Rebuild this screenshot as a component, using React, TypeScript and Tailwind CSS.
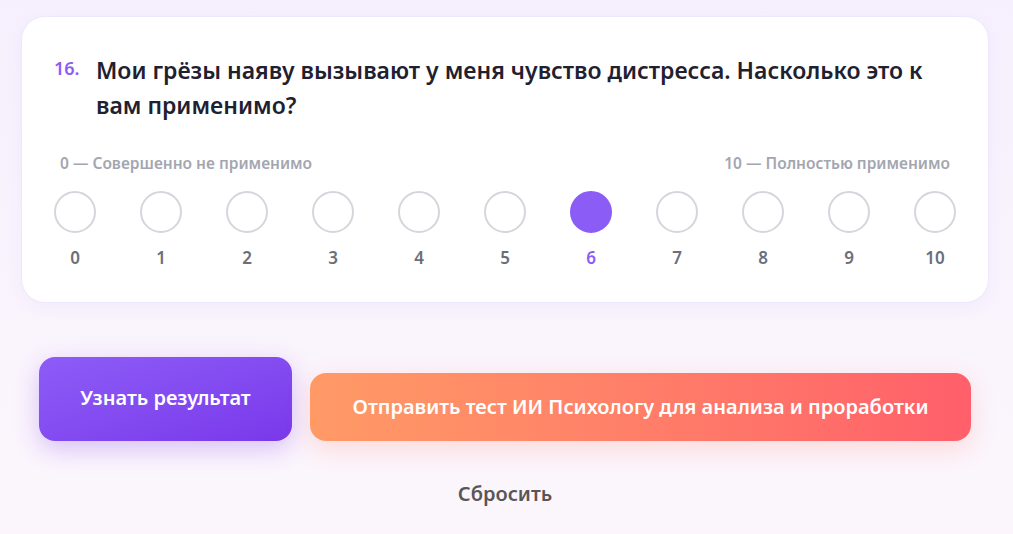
import React, { useState } from 'react';

const font = { fontFamily: '"Noto Sans", "Open Sans", sans-serif' };

const scale = [0, 1, 2, 3, 4, 5, 6, 7, 8, 9, 10];

export default function App() {
    const [value, setValue] = useState<number | null>(6);

    return (
        <div
            className="min-h-screen w-full bg-gradient-to-b from-[#f6f0fe] to-[#fcf6fc] px-[21px] pt-[16px]"
            style={font}
        >
            <div className="w-[968px] flex flex-col">
                {/* карточка вопроса */}
                <div className="bg-white rounded-[24px] border border-[#efe8fd] shadow-[0_4px_16px_rgba(139,92,246,0.06)] px-8 pt-[36px] pb-[32px]">
                    <div className="flex items-start gap-[16px]">
                        <span className="text-[18px] font-semibold text-[#8b5cf6] leading-[30px] w-[26px] shrink-0">16.</span>
                        <h2 className="text-[23px] font-semibold text-[#1f2130] leading-[35px]">
                            Мои грёзы наяву вызывают у меня чувство дистресса. Насколько это к вам применимо?
                        </h2>
                    </div>

                    <div className="flex justify-between px-[6px] mt-[30px] text-[15.5px] font-semibold text-[#a3a6b0] leading-[20px]">
                        <span>0 — Совершенно не применимо</span>
                        <span>10 — Полностью применимо</span>
                    </div>

                    <div className="flex justify-between mt-[18px]">
                        {scale.map(n => {
                            const selected = value === n;
                            return (
                                <button
                                    key={n}
                                    type="button"
                                    onClick={() => setValue(n)}
                                    className="flex flex-col items-center gap-[13px]"
                                >
                                    <div
                                        className={`w-[42px] h-[42px] rounded-full ${selected
                                            ? 'bg-[#8b5cf6] border-2 border-[#8b5cf6]'
                                            : 'bg-white border-2 border-[#d4d6dc]'}`}
                                    />
                                    <span
                                        className={`text-[17px] font-semibold leading-[24px] ${selected ? 'text-[#8b5cf6]' : 'text-[#6b6f7b]'}`}
                                    >
                                        {n}
                                    </span>
                                </button>
                            );
                        })}
                    </div>
                </div>

                {/* кнопки */}
                <div className="flex items-end gap-[18px] px-[18px] mt-[54px]">
                    <button className="w-[253px] h-[84px] rounded-[16px] bg-gradient-to-br from-[#8d5cf7] to-[#7a38ea] text-white text-[20px] font-semibold shadow-[0_8px_24px_rgba(124,58,237,0.28)] pb-[3px]">
                        Узнать результат
                    </button>
                    <button className="flex-1 h-[68px] rounded-[16px] bg-gradient-to-r from-[#ff9a66] to-[#ff5f6a] text-white text-[20px] font-semibold shadow-[0_8px_24px_rgba(255,120,90,0.22)]">
                        Отправить тест ИИ Психологу для анализа и проработки
                    </button>
                </div>

                <div className="flex justify-center mt-[38px]">
                    <button className="text-[20px] font-semibold text-[#5a5658]">Сбросить</button>
                </div>
            </div>
        </div>
    );
}
